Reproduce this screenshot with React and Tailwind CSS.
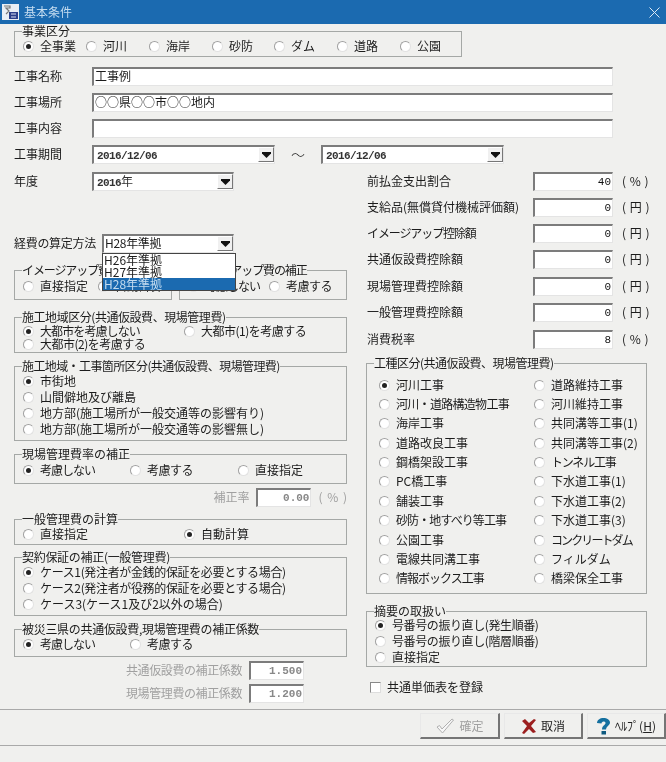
const jp = "font-['Noto_Sans_CJK_JP','Noto_Sans_CJK_SC',sans-serif]";
const mono = "font-['Liberation_Mono','Noto_Sans_CJK_JP',monospace]";

function Radio({ checked, label, t = "", className = "" }) {
  return (
    <div className={`flex items-center h-4 shrink-0 ${className}`}>
      <span className="w-[11px] h-[11px] rounded-full bg-white border border-[#a0a0a0] border-r-[#e2e2e2] border-b-[#e2e2e2] flex items-center justify-center shrink-0">
        {checked && <span className="w-[5px] h-[5px] rounded-full bg-[#222]" />}
      </span>
      {label && <span className={`ml-[6px] pb-px whitespace-nowrap ${t}`}>{label}</span>}
    </div>
  );
}

function Group({ title, t = "", className = "", children }) {
  return (
    <fieldset className={`border border-[#a5a8a6] pl-2 ${className}`}>
      <legend className={`-ml-px leading-[14px] whitespace-nowrap ${t}`}>{title}</legend>
      {children}
    </fieldset>
  );
}

const sunken = "bg-white border-t-2 border-l-2 border-[#7c7c7c] border-r border-b border-r-[#e4e4e4] border-b-[#e4e4e4]";

function Field({ value = "", className = "" }) {
  return <div className={`h-[19px] ${sunken} pl-[1px] leading-[14px] whitespace-nowrap ${className}`}>{value}</div>;
}

function NumField({ value, disabled, className = "" }) {
  return (
    <div className={`h-[19px] ${sunken} pr-[1px] text-right text-[11px] leading-[16px] ${mono} ${disabled ? "text-[#888] font-bold" : "text-[#111]"} ${className}`}>
      {value}
    </div>
  );
}

function Combo({ children, className = "" }) {
  return (
    <div className={`h-[19px] ${sunken} flex justify-between pl-[1px] ${className}`}>
      <span className="leading-[14px] whitespace-nowrap">{children}</span>
      <span className="w-4 h-[15px] bg-[#f0f0f0] border-l border-t border-white border-r border-b border-r-[#777] border-b-[#777] flex items-center justify-center">
        <svg width="9" height="6" viewBox="0 0 9 6"><path d="M0 0h9v1.500L4.500 6 0 1.500z" fill="#111" /></svg>
      </span>
    </div>
  );
}

function DateText({ children }) {
  return <span className={`${mono} ml-[2px] text-[11px] tracking-[-0.6px] font-bold text-[#333]`}>{children}</span>;
}

function LabelRow({ label, children, className = "" }) {
  return (
    <div className={`flex items-center h-[19px] ${className}`}>
      <span className="w-[78px] pb-[2px] shrink-0 whitespace-nowrap">{label}</span>
      {children}
    </div>
  );
}

function AmountRow({ label, value, unit, t = "", className = "" }) {
  return (
    <div className={`flex items-center h-[19px] ${className}`}>
      <span className="w-[166px] pb-[2px] shrink-0">
        <span className={`whitespace-nowrap ${t}`}>{label}</span>
      </span>
      <NumField value={value} className="w-[80px]" />
      <span className="ml-[9px] pb-[2px] whitespace-pre tracking-[0.5px]">{unit}</span>
    </div>
  );
}

function Button({ icon, label, disabled, className = "" }) {
  return (
    <div className={`h-[26px] flex items-center justify-center gap-[4px] bg-[#f0f0ee] border border-t-[#e8e8e8] border-l-[#e8e8e8] border-r-2 border-b-2 border-r-[#757575] border-b-[#757575] ${disabled ? "text-[#a0a0a0]" : "text-[#222]"} ${className}`}>
      {icon}
      <span className="whitespace-nowrap">{label}</span>
    </div>
  );
}

const kinds = [
  ["河川工事"],
  ["道路維持工事"],
  ["河川・道路構造物工事", "tracking-[-0.7px]"],
  ["河川維持工事"],
  ["海岸工事"],
  ["共同溝等工事(1)"],
  ["道路改良工事"],
  ["共同溝等工事(2)"],
  ["鋼橋架設工事"],
  ["トンネル工事", "tracking-[-1.2px]"],
  ["PC橋工事"],
  ["下水道工事(1)"],
  ["舗装工事"],
  ["下水道工事(2)"],
  ["砂防・地すべり等工事", "tracking-[-0.9px]"],
  ["下水道工事(3)"],
  ["公園工事"],
  ["コンクリートダム", "tracking-[-1.9px]"],
  ["電線共同溝工事"],
  ["フィルダム"],
  ["情報ボックス工事", "tracking-[-1px]"],
  ["橋梁保全工事"],
];

export default function App() {
  return (
    <div className={`w-[666px] h-[762px] bg-[#f0f0ee] text-[#1c1c1c] text-xs overflow-hidden relative blur-[0.3px] ${jp}`}>
      <div className="h-6 bg-[#1b6ab0] flex items-center justify-between text-[#c4dcf0] pl-[2px] pr-[6px]">
        <div className="flex items-center gap-[5px]">
          <svg width="17" height="16" viewBox="0 0 17 16">
            <rect width="17" height="16" fill="#e8eef5" />
            <path d="M2 2h6v2H4l3 3-3 3" fill="none" stroke="#777" strokeWidth="1.2" />
            <rect x="7" y="8" width="9" height="7" fill="#2a3f8a" />
            <path d="M9 10h5M9 13h5" stroke="#d8e0f0" strokeWidth="1" />
          </svg>
          <span>基本条件</span>
        </div>
        <svg width="11" height="11" viewBox="0 0 11 11"><path d="M.5.5l10 10M10.5.5l-10 10" stroke="#dbe8f4" strokeWidth="1" /></svg>
      </div>

      <div className="pl-[14px]">
        <Group title="事業区分" className="w-[448px] h-[33px]">
          <div className="flex">
            <Radio checked label="全事業" className="w-[63px]" />
            <Radio label="河川" className="w-[63px]" />
            <Radio label="海岸" className="w-[63px]" />
            <Radio label="砂防" className="w-[62px]" />
            <Radio label="ダム" className="w-[63px]" />
            <Radio label="道路" className="w-[63px]" />
            <Radio label="公園" />
          </div>
        </Group>

        <LabelRow label="工事名称" className="mt-[10px]"><Field value="工事例" className="w-[521px]" /></LabelRow>
        <LabelRow label="工事場所" className="mt-[7px]"><Field value="○○県○○市○○地内" className="w-[521px]" /></LabelRow>
        <LabelRow label="工事内容" className="mt-[7px]"><Field className="w-[521px]" /></LabelRow>
        <LabelRow label="工事期間" className="mt-[7px]">
          <Combo className="w-[183px]"><DateText>2016/12/06</DateText></Combo>
          <span className="w-[46px] pb-[2px] text-center text-sm font-light">～</span>
          <Combo className="w-[183px]"><DateText>2016/12/06</DateText></Combo>
        </LabelRow>

        <div className="flex mt-[8px]">
          <div className="w-[333px] shrink-0 relative">
            <LabelRow label="年度">
              <Combo className="w-[142px]"><DateText>2016</DateText><span className="text-[#333]">年</span></Combo>
            </LabelRow>

            <div className="flex items-center h-[19px] mt-[43px]">
              <span className="w-[88px] pb-[2px] shrink-0 whitespace-nowrap tracking-[-0.3px]">経費の算定方法</span>
              <Combo className="w-[132px]"><span className="tracking-[-0.3px]">H28年準拠</span></Combo>
            </div>

            <div className="flex gap-[7px] mt-[10px]">
              <Group title="イメージアップ費の補正" t="tracking-[-1.1px]" className="w-[158px] h-[37px]">
                <div className="flex mt-[1px]">
                  <Radio label="直接指定" className="w-[75px]" />
                  <Radio label="自動計算" />
                </div>
              </Group>
              <Group title="イメージアップ費の補正" t="tracking-[-1.1px]" className="w-[168px] h-[37px]">
                <div className="flex mt-[1px]">
                  <Radio label="考慮しない" t="tracking-[-1px]" className="w-[81px]" />
                  <Radio label="考慮する" t="tracking-[-0.5px]" />
                </div>
              </Group>
            </div>

            <div className="absolute left-[88px] top-[81px] w-[134px] h-[38px] bg-white border border-[#444] leading-[12px] z-10">
              <div className="pl-[1px]">H26年準拠</div>
              <div className="pl-[1px]">H27年準拠</div>
              <div className="pl-[1px] bg-[#1b6ab0] text-[#c4dcf0]">H28年準拠</div>
            </div>

            <Group title="施工地域区分(共通仮設費、現場管理費)" t="tracking-[-0.45px]" className="mt-[10px] h-[43px]">
              <div className="flex -mt-[1px]">
                <Radio checked label="大都市を考慮しない" t="tracking-[-0.9px]" className="w-[161px]" />
                <Radio label="大都市(1)を考慮する" t="tracking-[-0.5px]" />
              </div>
              <Radio label="大都市(2)を考慮する" t="tracking-[-0.5px]" className="-mt-[3px]" />
            </Group>

            <Group title="施工地域・工事箇所区分(共通仮設費、現場管理費)" t="tracking-[-0.6px]" className="mt-[6px] h-[82px]">
              <Radio checked label="市街地" />
              <Radio label="山間僻地及び離島" />
              <Radio label="地方部(施工場所が一般交通等の影響有り)" />
              <Radio label="地方部(施工場所が一般交通等の影響無し)" />
            </Group>

            <Group title="現場管理費率の補正" className="mt-[6px] h-[37px]">
              <div className="flex mt-[1px]">
                <Radio checked label="考慮しない" t="tracking-[-1px]" className="w-[107px]" />
                <Radio label="考慮する" t="tracking-[-0.5px]" className="w-[108px]" />
                <Radio label="直接指定" />
              </div>
            </Group>

            <div className="flex items-center justify-end h-[19px] mt-[4px] text-[#a0a0a0] -mr-[1px]">
              <span className="mr-[7px] pb-[2px]">補正率</span>
              <NumField value="0.00" disabled className="w-[55px]" />
              <span className="ml-[7px] pb-[2px] whitespace-pre tracking-[1px]">( % )</span>
            </div>

            <Group title="一般管理費の計算" className="mt-[5px] h-[33px]">
              <div className="flex">
                <Radio label="直接指定" className="w-[161px]" />
                <Radio checked label="自動計算" />
              </div>
            </Group>

            <Group title="契約保証の補正(一般管理費)" t="tracking-[-0.3px]" className="mt-[5px] h-[66px]">
              <Radio checked label="ケース1(発注者が金銭的保証を必要とする場合)" t="tracking-[-0.35px]" />
              <Radio label="ケース2(発注者が役務的保証を必要とする場合)" t="tracking-[-0.35px]" />
              <Radio label="ケース3(ケース1及び2以外の場合)" />
            </Group>

            <Group title="被災三県の共通仮設費,現場管理費の補正係数" t="tracking-[-0.3px]" className="mt-[6px] h-[35px]">
              <div className="flex">
                <Radio checked label="考慮しない" t="tracking-[-1px]" className="w-[107px]" />
                <Radio label="考慮する" t="tracking-[-0.5px]" />
              </div>
            </Group>

            <div className="flex items-center justify-end h-[19px] mt-[4px] text-[#a0a0a0] pr-[43px]">
              <span className="mr-[7px] pb-[2px] tracking-[-0.4px]">共通仮設費の補正係数</span>
              <NumField value="1.500" disabled className="w-[55px]" />
            </div>
            <div className="flex items-center justify-end h-[19px] mt-[4px] text-[#a0a0a0] pr-[43px]">
              <span className="mr-[7px] pb-[2px] tracking-[-0.4px]">現場管理費の補正係数</span>
              <NumField value="1.200" disabled className="w-[55px]" />
            </div>
          </div>

          <div className="ml-[20px] w-[290px]">
            <AmountRow label="前払金支出割合" value="40" unit="( % )" />
            <AmountRow label="支給品(無償貸付機械評価額)" value="0" unit="( 円 )" className="mt-[7px]" />
            <AmountRow label="イメージアップ控除額" t="tracking-[-1.1px]" value="0" unit="( 円 )" className="mt-[7px]" />
            <AmountRow label="共通仮設費控除額" value="0" unit="( 円 )" className="mt-[7px]" />
            <AmountRow label="現場管理費控除額" value="0" unit="( 円 )" className="mt-[8px]" />
            <AmountRow label="一般管理費控除額" value="0" unit="( 円 )" className="mt-[7px]" />
            <AmountRow label="消費税率" value="8" unit="( % )" className="mt-[8px]" />

            <Group title="工種区分(共通仮設費、現場管理費)" t="tracking-[-0.5px]" className="mt-[7px] -ml-px w-[281px] h-[238px]">
              <div className="grid grid-cols-[155px_1fr] gap-y-[3.4px] pl-1 pt-[7px]">
                {kinds.map(([k, t], i) => (
                  <Radio key={k} checked={i === 0} label={k} t={t} />
                ))}
              </div>
            </Group>

            <Group title="摘要の取扱い" className="mt-[10px] -ml-px w-[281px] h-[63px]">
              <div className="-mt-[1px]">
                <Radio checked label="号番号の振り直し(発生順番)" t="tracking-[-0.4px]" />
                <Radio label="号番号の振り直し(階層順番)" t="tracking-[-0.4px]" />
                <Radio label="直接指定" />
              </div>
            </Group>

            <div className="flex items-center mt-[12px] ml-[3px] h-[16px]">
              <span className="w-[11px] h-[11px] bg-white border border-[#888] border-r-[#ddd] border-b-[#ddd]" />
              <span className="ml-[6px] pb-px">共通単価表を登録</span>
            </div>
          </div>
        </div>
      </div>

      <div className="absolute left-0 right-0 top-[709px] h-[37px] border-t border-b border-[#a9a9a9] flex justify-end items-start pt-[3px] gap-[4px]">
        <Button disabled label="確定" className="w-[80px]" icon={
          <svg width="20" height="16" viewBox="0 0 20 16"><path d="M2 9l2.500-1.500L7 11 17 1l1.500 1L7.500 15z" fill="#f7f7f7" stroke="#b0b0b0" /></svg>
        } />
        <Button label="取消" className="w-[79px]" icon={
          <svg width="16" height="16" viewBox="0 0 16 16"><path d="M1 3l3-2 4 4 5-4 2 1-5 6 5 6-3 1-4-4-5 5-2-1 5-7z" fill="#9c1f1f" /></svg>
        } />
        <Button label={<span>ﾍﾙﾌﾟ(<u>H</u>)</span>} className="w-[79px]" icon={
          <svg width="15" height="18" viewBox="0 0 15 18"><path d="M1 6c0-3 3-5 6.500-5S14 3 14 5.500c0 3-3.500 3.500-4 7H6c0-4 3.500-4.500 3.500-6.500 0-1-.8-1.500-2-1.500S5.500 5.500 5.500 6.500z" fill="#15709f" /><rect x="5.500" y="14" width="4.500" height="3.500" fill="#0f5a80" /></svg>
        } />
      </div>
    </div>
  );
}
